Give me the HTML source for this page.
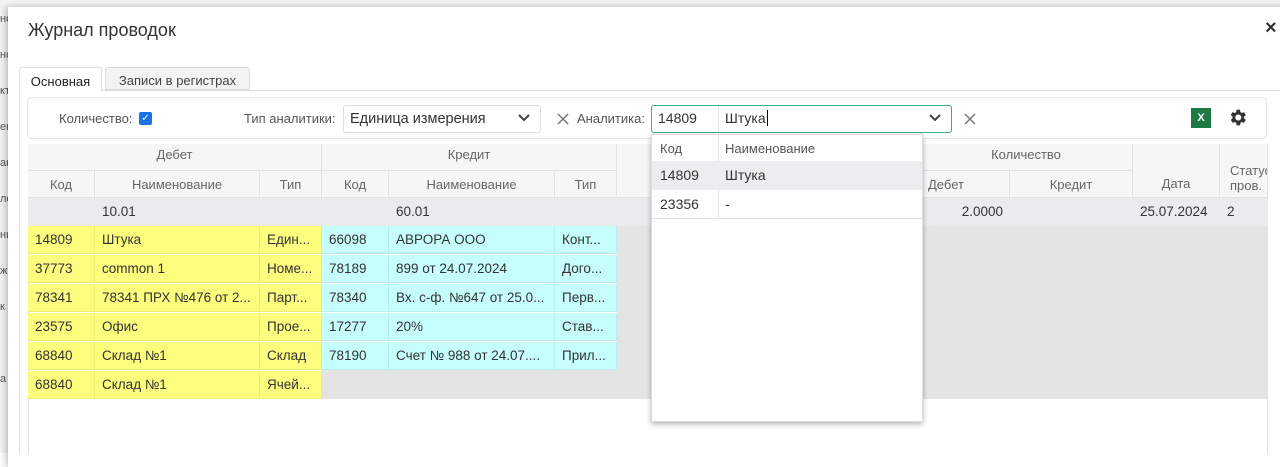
<!DOCTYPE html><html><head><meta charset="utf-8"><style>
*{box-sizing:border-box;margin:0;padding:0}
body{width:1280px;height:453px;overflow:hidden;background:#fff;font-family:"Liberation Sans","DejaVu Sans",sans-serif;font-size:13px;color:#333;position:relative}
.a{position:absolute}
.bg{color:#555;font-size:12px}
.c{position:absolute;height:28px;line-height:28px;padding-left:7px;white-space:nowrap;overflow:hidden;border-right:1px solid rgba(0,0,0,.06);border-bottom:1px solid rgba(0,0,0,.06);font-size:13.5px;color:#333}
.h{position:absolute;text-align:center;color:#666;font-size:13px;border-right:1px solid #e2e2e2;border-bottom:1px solid #e2e2e2;background:#f6f6f7}
.y{background:#fdfd7e}.b{background:#c6fdfd}
</style></head><body>
<!-- background page -->
<div class="a" style="left:0;top:0;width:1280px;height:8px;background:#f2f2f2;border-bottom:1px solid #ddd"></div>
<div class="a" style="left:0;top:0;width:8px;height:453px;background:#f2f2f2"></div>
<div class="a bg" style="left:0;top:10px;line-height:18px;font-size:11px">но<br><br>но<br><br>кт<br><br>ен<br><br>ан<br><br>ле<br><br>ни<br><br>ж<br><br>к<br><br><br><br>а</div>
<!-- modal -->
<div class="a" style="left:8px;top:7px;width:1280px;height:460px;background:#fff;box-shadow:-2px 0 6px rgba(0,0,0,.25)">
</div>
<div class="a" style="left:28px;top:20px;font-size:18px;color:#333">Журнал проводок</div>
<div class="a" style="left:1265px;top:17px;font-size:20px;color:#333;font-weight:bold">×</div>
<!-- tabs -->
<div class="a" style="left:19px;top:90px;width:1261px;height:363px;border-top:1px solid #ddd;border-left:1px solid #ddd"></div>
<div class="a" style="left:19px;top:67px;width:83px;height:24px;border:1px solid #ddd;border-bottom:1px solid #fff;background:#fff;border-radius:3px 3px 0 0;font-size:13px;color:#222;text-align:center;line-height:28px">Основная</div>
<div class="a" style="left:105px;top:67px;width:145px;height:23px;border:1px solid #ddd;background:#f3f3f3;border-radius:3px 3px 0 0;font-size:13px;color:#444;text-align:center;line-height:26px">Записи в регистрах</div>
<!-- toolbar -->
<div class="a" style="left:27px;top:97px;width:1240px;height:42px;border:1px solid #e6e6e6;border-radius:4px"></div>
<div class="a" style="left:59px;top:111px;color:#555">Количество:</div>
<div class="a" style="left:139px;top:112px;width:13px;height:13px;background:#1a73e8;border-radius:2px;color:#fff;font-size:10px;line-height:13px;text-align:center">✓</div>
<div class="a" style="left:244px;top:111px;color:#555">Тип аналитики:</div>
<div class="a" style="left:343px;top:105px;width:198px;height:28px;border:1px solid #ddd;border-radius:3px;line-height:26px;padding-left:6px;font-size:14.5px;color:#333">Единица измерения</div>
<svg class="a" style="left:518px;top:113px" width="12" height="10"><path d="M1 2l5 5 5-5" stroke="#444" stroke-width="2" fill="none"/></svg>
<svg class="a" style="left:557px;top:113px" width="12" height="12"><path d="M1 1l10 10M11 1L1 11" stroke="#777" stroke-width="1.5"/></svg>
<div class="a" style="left:577px;top:111px;color:#555">Аналитика:</div>
<div class="a" style="left:651px;top:105px;width:301px;height:28px;border:1px solid #3cae83;border-radius:3px"></div>
<div class="a" style="left:658px;top:110px;font-size:14px">14809</div>
<div class="a" style="left:718px;top:106px;width:1px;height:26px;background:#e4e4e4"></div>
<div class="a" style="left:725px;top:110px;font-size:14px">Штука<span style="border-left:1px solid #000;margin-left:1px"></span></div>
<svg class="a" style="left:929px;top:113px" width="12" height="10"><path d="M1 2l5 5 5-5" stroke="#444" stroke-width="2" fill="none"/></svg>
<svg class="a" style="left:964px;top:113px" width="12" height="12"><path d="M1 1l10 10M11 1L1 11" stroke="#777" stroke-width="1.5"/></svg>
<div class="a" style="left:1191px;top:108px;width:20px;height:20px;background:#1d7a45;color:#fff;font-size:11px;font-weight:bold;text-align:center;line-height:20px">X</div>
<svg class="a" style="left:1227px;top:107px" width="21" height="21" viewBox="0 0 24 24"><path fill="#333" d="M19.4 13a7.5 7.5 0 000-2l2.1-1.6-2-3.5-2.5 1a7.6 7.6 0 00-1.7-1L14.9 3h-4l-.4 2.9a7.6 7.6 0 00-1.7 1l-2.5-1-2 3.5L6.4 11a7.5 7.5 0 000 2l-2.1 1.6 2 3.5 2.5-1a7.6 7.6 0 001.7 1l.4 2.9h4l.4-2.9a7.6 7.6 0 001.7-1l2.5 1 2-3.5zM12.9 15.5a3.5 3.5 0 110-7 3.5 3.5 0 010 7z"/></svg>
<!-- table -->
<div class="a" style="left:28px;top:144px;width:1240px;height:309px;border-left:1px solid #e2e2e2;border-right:1px solid #e2e2e2"></div>
<div class="h" style="left:28px;top:144px;width:294px;height:27px;line-height:22px">Дебет</div>
<div class="h" style="left:322px;top:144px;width:295px;height:27px;line-height:22px">Кредит</div>
<div class="h" style="left:617px;top:144px;width:303px;height:54px"></div>
<div class="h" style="left:920px;top:144px;width:213px;height:27px;line-height:22px">Количество</div>
<div class="h" style="left:1133px;top:144px;width:87px;height:54px;line-height:80px">Дата</div>
<div class="h" style="left:1220px;top:144px;width:48px;height:54px;line-height:15px;padding-top:19px;text-align:left;padding-left:10px;overflow:hidden;white-space:nowrap">Статус<br>пров.</div>
<div class="h" style="left:28px;top:171px;width:67px;height:27px;line-height:28px">Код</div>
<div class="h" style="left:95px;top:171px;width:165px;height:27px;line-height:28px">Наименование</div>
<div class="h" style="left:260px;top:171px;width:62px;height:27px;line-height:28px">Тип</div>
<div class="h" style="left:322px;top:171px;width:67px;height:27px;line-height:28px">Код</div>
<div class="h" style="left:389px;top:171px;width:166px;height:27px;line-height:28px">Наименование</div>
<div class="h" style="left:555px;top:171px;width:62px;height:27px;line-height:28px">Тип</div>
<div class="h" style="left:920px;top:171px;width:90px;height:27px;line-height:28px;text-align:left;padding-left:8px">Дебет</div>
<div class="h" style="left:1010px;top:171px;width:123px;height:27px;line-height:28px">Кредит</div>
<!-- total row -->
<div class="a" style="left:28px;top:198px;width:1240px;height:28px;background:#ebebee"></div>
<div class="c" style="left:95px;top:198px;width:165px;border:none">10.01</div>
<div class="c" style="left:389px;top:198px;width:166px;border:none">60.01</div>
<div class="c" style="left:920px;top:198px;width:90px;border:none;text-align:right;padding-right:7px">2.0000</div>
<div class="c" style="left:1133px;top:198px;width:87px;border:none">25.07.2024</div>
<div class="c" style="left:1220px;top:198px;width:40px;border:none">2</div>
<div class="a" style="left:617px;top:226px;width:651px;height:173px;background:#e4e4e4"></div>
<div class="a" style="left:322px;top:370px;width:295px;height:29px;background:#e4e4e4"></div>
<!-- rows -->
<div class="c y" style="left:28px;top:226px;width:67px">14809</div><div class="c y" style="left:95px;top:226px;width:165px">Штука</div><div class="c y" style="left:260px;top:226px;width:62px">Един...</div><div class="c b" style="left:322px;top:226px;width:67px">66098</div><div class="c b" style="left:389px;top:226px;width:166px">АВРОРА ООО</div><div class="c b" style="left:555px;top:226px;width:62px">Конт...</div>
<div class="c y" style="left:28px;top:255px;width:67px">37773</div><div class="c y" style="left:95px;top:255px;width:165px">common 1</div><div class="c y" style="left:260px;top:255px;width:62px">Номе...</div><div class="c b" style="left:322px;top:255px;width:67px">78189</div><div class="c b" style="left:389px;top:255px;width:166px">899 от 24.07.2024</div><div class="c b" style="left:555px;top:255px;width:62px">Дого...</div>
<div class="c y" style="left:28px;top:284px;width:67px">78341</div><div class="c y" style="left:95px;top:284px;width:165px">78341 ПРХ №476 от 2...</div><div class="c y" style="left:260px;top:284px;width:62px">Парт...</div><div class="c b" style="left:322px;top:284px;width:67px">78340</div><div class="c b" style="left:389px;top:284px;width:166px">Вх. с-ф. №647 от 25.0...</div><div class="c b" style="left:555px;top:284px;width:62px">Перв...</div>
<div class="c y" style="left:28px;top:313px;width:67px">23575</div><div class="c y" style="left:95px;top:313px;width:165px">Офис</div><div class="c y" style="left:260px;top:313px;width:62px">Прое...</div><div class="c b" style="left:322px;top:313px;width:67px">17277</div><div class="c b" style="left:389px;top:313px;width:166px">20%</div><div class="c b" style="left:555px;top:313px;width:62px">Став...</div>
<div class="c y" style="left:28px;top:342px;width:67px">68840</div><div class="c y" style="left:95px;top:342px;width:165px">Склад №1</div><div class="c y" style="left:260px;top:342px;width:62px">Склад</div><div class="c b" style="left:322px;top:342px;width:67px">78190</div><div class="c b" style="left:389px;top:342px;width:166px">Счет № 988 от 24.07....</div><div class="c b" style="left:555px;top:342px;width:62px">Прил...</div>
<div class="c y" style="left:28px;top:371px;width:67px">68840</div><div class="c y" style="left:95px;top:371px;width:165px">Склад №1</div><div class="c y" style="left:260px;top:371px;width:62px">Ячей...</div>
<!-- dropdown -->
<div class="a" style="left:651px;top:134px;width:272px;height:288px;background:#fff;border:1px solid #ddd;box-shadow:0 2px 5px rgba(0,0,0,.3)"></div>
<div class="a" style="left:718px;top:135px;width:1px;height:84px;background:#e4e4e4"></div>
<div class="a" style="left:652px;top:161px;width:270px;height:29px;background:#ededef"></div>
<div class="a" style="left:652px;top:218px;width:270px;height:1px;background:#e4e4e4"></div>
<div class="a" style="left:660px;top:141px;color:#555">Код</div>
<div class="a" style="left:725px;top:141px;color:#555">Наименование</div>
<div class="a" style="left:660px;top:167px;font-size:14px">14809</div>
<div class="a" style="left:725px;top:167px;font-size:14px">Штука</div>
<div class="a" style="left:660px;top:196px;font-size:14px">23356</div>
<div class="a" style="left:725px;top:196px;font-size:14px">-</div>
</body></html>
